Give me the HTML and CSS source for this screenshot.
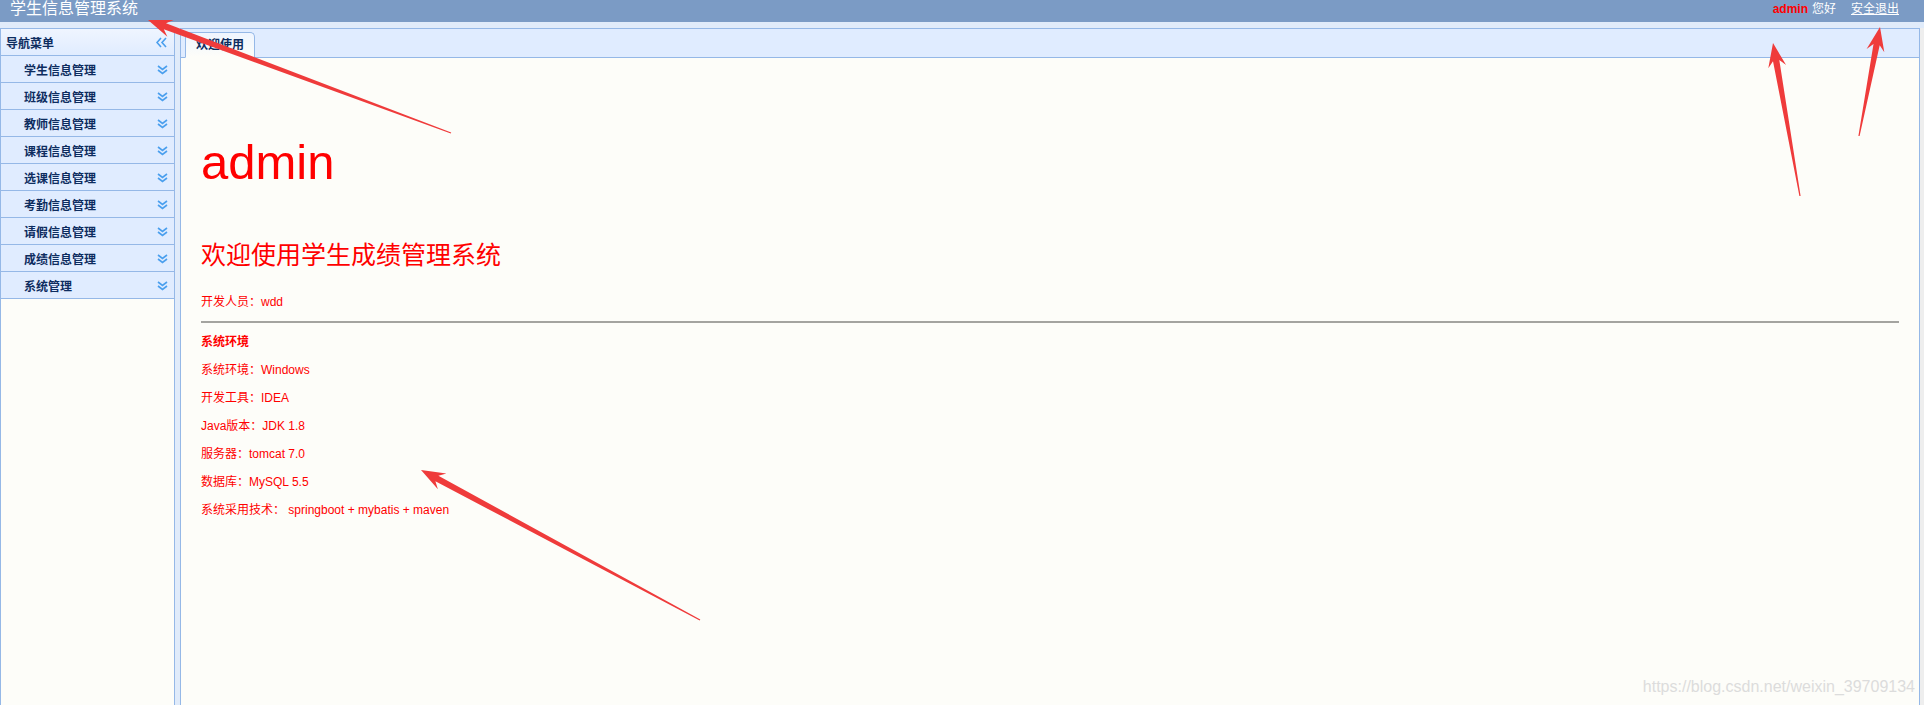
FILE: index.html
```html
<!DOCTYPE html>
<html lang="zh">
<head>
  <meta charset="UTF-8" />
  <title>学生信息管理系统</title>
  <link rel="stylesheet" href="styles.css">
</head>
<body>
  <div class="topbar">
    <div class="brand">学生信息管理系统</div>
    <div class="user">
      <span class="uname">admin</span><span>您好</span><a href="#" class="logout">安全退出</a>
    </div>
  </div>

  <div class="layout">
    <aside class="west">
      <div class="west-title">
        <span>导航菜单</span>
        <svg class="ico" width="11" height="11" viewBox="0 0 11 11">
          <polyline points="5,1 1,5.5 5,10" />
          <polyline points="10,1 6,5.5 10,10" />
        </svg>
      </div>
      <ul class="menu">
        <li><span>学生信息管理</span><svg class="ico" width="11" height="10" viewBox="0 0 11 10"><polyline points="1,1 5.5,4.5 10,1" /><polyline points="1,5 5.5,8.5 10,5" /></svg></li>
        <li><span>班级信息管理</span><svg class="ico" width="11" height="10" viewBox="0 0 11 10"><polyline points="1,1 5.5,4.5 10,1" /><polyline points="1,5 5.5,8.5 10,5" /></svg></li>
        <li><span>教师信息管理</span><svg class="ico" width="11" height="10" viewBox="0 0 11 10"><polyline points="1,1 5.5,4.5 10,1" /><polyline points="1,5 5.5,8.5 10,5" /></svg></li>
        <li><span>课程信息管理</span><svg class="ico" width="11" height="10" viewBox="0 0 11 10"><polyline points="1,1 5.5,4.5 10,1" /><polyline points="1,5 5.5,8.5 10,5" /></svg></li>
        <li><span>选课信息管理</span><svg class="ico" width="11" height="10" viewBox="0 0 11 10"><polyline points="1,1 5.5,4.5 10,1" /><polyline points="1,5 5.5,8.5 10,5" /></svg></li>
        <li><span>考勤信息管理</span><svg class="ico" width="11" height="10" viewBox="0 0 11 10"><polyline points="1,1 5.5,4.5 10,1" /><polyline points="1,5 5.5,8.5 10,5" /></svg></li>
        <li><span>请假信息管理</span><svg class="ico" width="11" height="10" viewBox="0 0 11 10"><polyline points="1,1 5.5,4.5 10,1" /><polyline points="1,5 5.5,8.5 10,5" /></svg></li>
        <li><span>成绩信息管理</span><svg class="ico" width="11" height="10" viewBox="0 0 11 10"><polyline points="1,1 5.5,4.5 10,1" /><polyline points="1,5 5.5,8.5 10,5" /></svg></li>
        <li><span>系统管理</span><svg class="ico" width="11" height="10" viewBox="0 0 11 10"><polyline points="1,1 5.5,4.5 10,1" /><polyline points="1,5 5.5,8.5 10,5" /></svg></li>
      </ul>
    </aside>

    <div class="split"></div>

    <main class="center">
      <div class="tabs">
        <div class="tab">欢迎使用</div>
      </div>
      <div class="welcome">
        <h1 class="who">admin</h1>
        <h2 class="hello">欢迎使用学生成绩管理系统</h2>
        <p class="dev">开发人员：wdd</p>
        <div class="rule"></div>
        <p class="env-title">系统环境</p>
        <p class="env">系统环境：Windows</p>
        <p class="env">开发工具：IDEA</p>
        <p class="env">Java版本：JDK 1.8</p>
        <p class="env">服务器：tomcat 7.0</p>
        <p class="env">数据库：MySQL 5.5</p>
        <p class="env">系统采用技术： springboot + mybatis + maven</p>
      </div>
    </main>

    <div class="edge"></div>
  </div>

  <!-- annotation arrows drawn over the page -->
  <svg class="marks" width="1924" height="705" viewBox="0 0 1924 705">
    <polygon points="148,20 173.6,20.0 166.0,23.3 451.2,132.4 450.8,133.6 163.8,29.3 167.4,36.8" />
    <polygon points="1773,43 1786.1,65.0 1779.3,60.1 1800.6,195.9 1799.4,196.1 1773.0,61.3 1768.3,68.2" />
    <polygon points="1880,27 1866.6,48.9 1873.5,44.1 1858.4,135.9 1859.6,136.1 1879.7,45.3 1884.3,52.3" />
    <polygon points="421,470 446.4,473.5 438.4,475.7 700.3,619.5 699.7,620.5 435.4,481.3 437.9,489.3" />
  </svg>

  <div class="watermark">https://blog.csdn.net/weixin_39709134</div>
</body>
</html>
```

FILE: styles.css
```css
* {
  margin: 0;
  padding: 0;
  box-sizing: border-box;
}

body {
  height: 100vh;
  overflow: hidden;
  background-color: #e0ebfa;
  font-family: "Liberation Sans", "Noto Sans CJK SC", sans-serif;
  font-size: 12px;
  position: relative;
}

/* top bar */
.topbar {
  height: 22px;
  background-color: #7b9bc5;
  color: #fff;
  display: flex;
  justify-content: space-between;
  align-items: flex-start;
}

.brand {
  font-size: 16px;
  line-height: 18px;
  padding-left: 10px;
}

.user {
  font-size: 12px;
  line-height: 18px;
  padding-right: 25px;
}

.uname {
  color: #ff0000;
  font-weight: bold;
  margin-right: 4px;
}

.logout {
  color: #fff;
  margin-left: 15px;
  text-decoration: underline;
}

/* main layout */
.layout {
  display: grid;
  grid-template-columns: 175px 5px 1740px 4px;
  height: calc(100vh - 22px);
  padding-top: 6px;
}

.west {
  border: 1px solid #95b8e7;
  border-bottom: none;
  background-color: #fdfdf9;
}

.west-title {
  height: 27px;
  border-bottom: 1px solid #95b8e7;
  background: linear-gradient(#eff5ff, #e0ecff);
  color: #0e2d5f;
  font-weight: bold;
  display: flex;
  justify-content: space-between;
  align-items: center;
  padding: 0 7px 0 5px;
}

.ico {
  fill: none;
  stroke: #4a9fee;
  stroke-width: 1.6;
}

.menu {
  list-style: none;
}

.menu li {
  height: 27px;
  border-bottom: 1px solid #95b8e7;
  background-color: #e0ecff;
  color: #0e2d5f;
  font-weight: bold;
  display: flex;
  justify-content: space-between;
  align-items: center;
  padding: 0 6px 0 23px;
}

.menu li .ico {
  margin-top: 1px;
}

.center {
  border: 1px solid #95b8e7;
  border-bottom: none;
  background-color: #fdfdf9;
}

.edge {
  background-color: #eeeeee;
}

/* tabs */
.tabs {
  height: 29px;
  background-color: #e0ecff;
  border-bottom: 1px solid #95b8e7;
  display: flex;
  align-items: flex-end;
  padding-left: 4px;
}

.tab {
  height: 26px;
  margin-bottom: -1px;
  padding: 0 10px;
  border: 1px solid #95b8e7;
  border-bottom-color: #fdfdf9;
  border-radius: 5px 5px 0 0;
  background: linear-gradient(#eff5ff, #fdfdf9);
  color: #0e2d5f;
  font-weight: bold;
  line-height: 24px;
}

/* welcome page */
.welcome {
  padding: 0 20px;
  color: #ff0000;
}

.who {
  font-size: 49px;
  font-weight: normal;
  line-height: 56px;
  margin-top: 76px;
}

.hello {
  font-size: 25px;
  font-weight: normal;
  line-height: 30px;
  margin-top: 50px;
}

.dev {
  line-height: 16px;
  margin-top: 24px;
}

.rule {
  height: 2px;
  background-color: #a4a4a0;
  margin-top: 11px;
  margin-bottom: 5px;
}

.env-title,
.env {
  line-height: 28px;
}

.env-title {
  font-weight: bold;
}

/* overlays */
.marks {
  position: absolute;
  top: 0;
  left: 0;
  pointer-events: none;
}

.marks polygon {
  fill: #ef3b3b;
}

.watermark {
  position: absolute;
  right: 9px;
  bottom: 9px;
  font-family: "Liberation Sans", sans-serif;
  font-size: 16px;
  line-height: 18px;
  color: #dcdcdc;
}
```
